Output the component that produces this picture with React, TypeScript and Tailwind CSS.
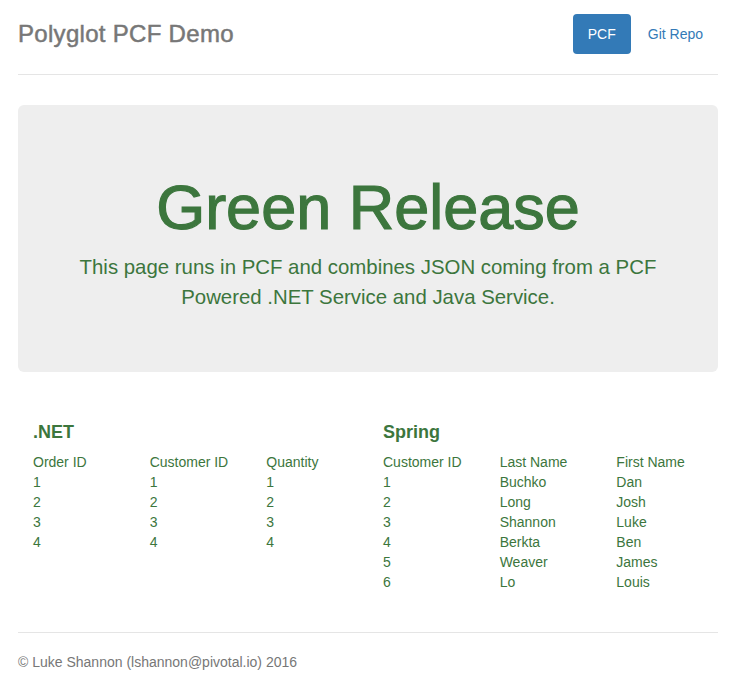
const dotnetRows = [
  ['1', '1', '1'],
  ['2', '2', '2'],
  ['3', '3', '3'],
  ['4', '4', '4'],
];

const springRows = [
  ['1', 'Buchko', 'Dan'],
  ['2', 'Long', 'Josh'],
  ['3', 'Shannon', 'Luke'],
  ['4', 'Berkta', 'Ben'],
  ['5', 'Weaver', 'James'],
  ['6', 'Lo', 'Louis'],
];

function DataBlock({ title, cols, rows }: { title: string; cols: string[]; rows: string[][] }) {
  return (
    <div className="px-[15px]">
      <h4 className="mt-[10px] mb-[10px] text-[18px] leading-[20px] font-bold">{title}</h4>
      <div className="-mx-[15px]">
        <div className="grid grid-cols-3">
          {cols.map((c) => (
            <div key={c} className="px-[15px] leading-[20px]">
              {c}
            </div>
          ))}
        </div>
        {rows.map((r, i) => (
          <div key={i} className="grid grid-cols-3">
            {r.map((v, j) => (
              <div key={j} className="px-[15px] leading-[20px]">
                {v}
              </div>
            ))}
          </div>
        ))}
      </div>
    </div>
  );
}

export default function App() {
  return (
    <div className="min-h-[680px] bg-white pl-[18px] pr-[20px] text-[14px] text-[#333] font-['Liberation_Sans',Arial,sans-serif]">
      {/* header */}
      <div className="flex items-center justify-between pt-[14px] pb-[20px] border-b border-[#e5e5e5]">
        <h3 className="m-0 text-[24px] leading-[40px] tracking-[0.3px] text-[#777] [-webkit-text-stroke:0.5px_#777]">
          Polyglot PCF Demo
        </h3>
        <ul className="flex">
          <li>
            <a className="block rounded-[4px] bg-[#337ab7] px-[15px] py-[10px] leading-[20px] text-white">PCF</a>
          </li>
          <li className="ml-[2px]">
            <a className="block px-[15px] py-[10px] leading-[20px] text-[#337ab7]">Git Repo</a>
          </li>
        </ul>
      </div>

      {/* jumbotron */}
      <div className="mt-[30px] rounded-[6px] bg-[#eee] px-[50px] pt-[68px] pb-[60px] text-center text-[#3c763d]">
        <h1 className="m-0 text-[63px] leading-[69px] [-webkit-text-stroke:1.2px_#3c763d]">Green Release</h1>
        <p className="mt-[10px] text-[20.4px] leading-[30px]">
          This page runs in PCF and combines JSON coming from a PCF Powered .NET Service and Java Service.
        </p>
      </div>

      {/* marketing */}
      <div className="my-[40px] grid grid-cols-2 text-[#3c763d]">
        <DataBlock title=".NET" cols={['Order ID', 'Customer ID', 'Quantity']} rows={dotnetRows} />
        <DataBlock title="Spring" cols={['Customer ID', 'Last Name', 'First Name']} rows={springRows} />
      </div>

      {/* footer */}
      <footer className="border-t border-[#e5e5e5] pt-[19px] text-[#777]">
        <p className="leading-[20px] mb-[10px]">© Luke Shannon (lshannon@pivotal.io) 2016</p>
      </footer>
    </div>
  );
}
